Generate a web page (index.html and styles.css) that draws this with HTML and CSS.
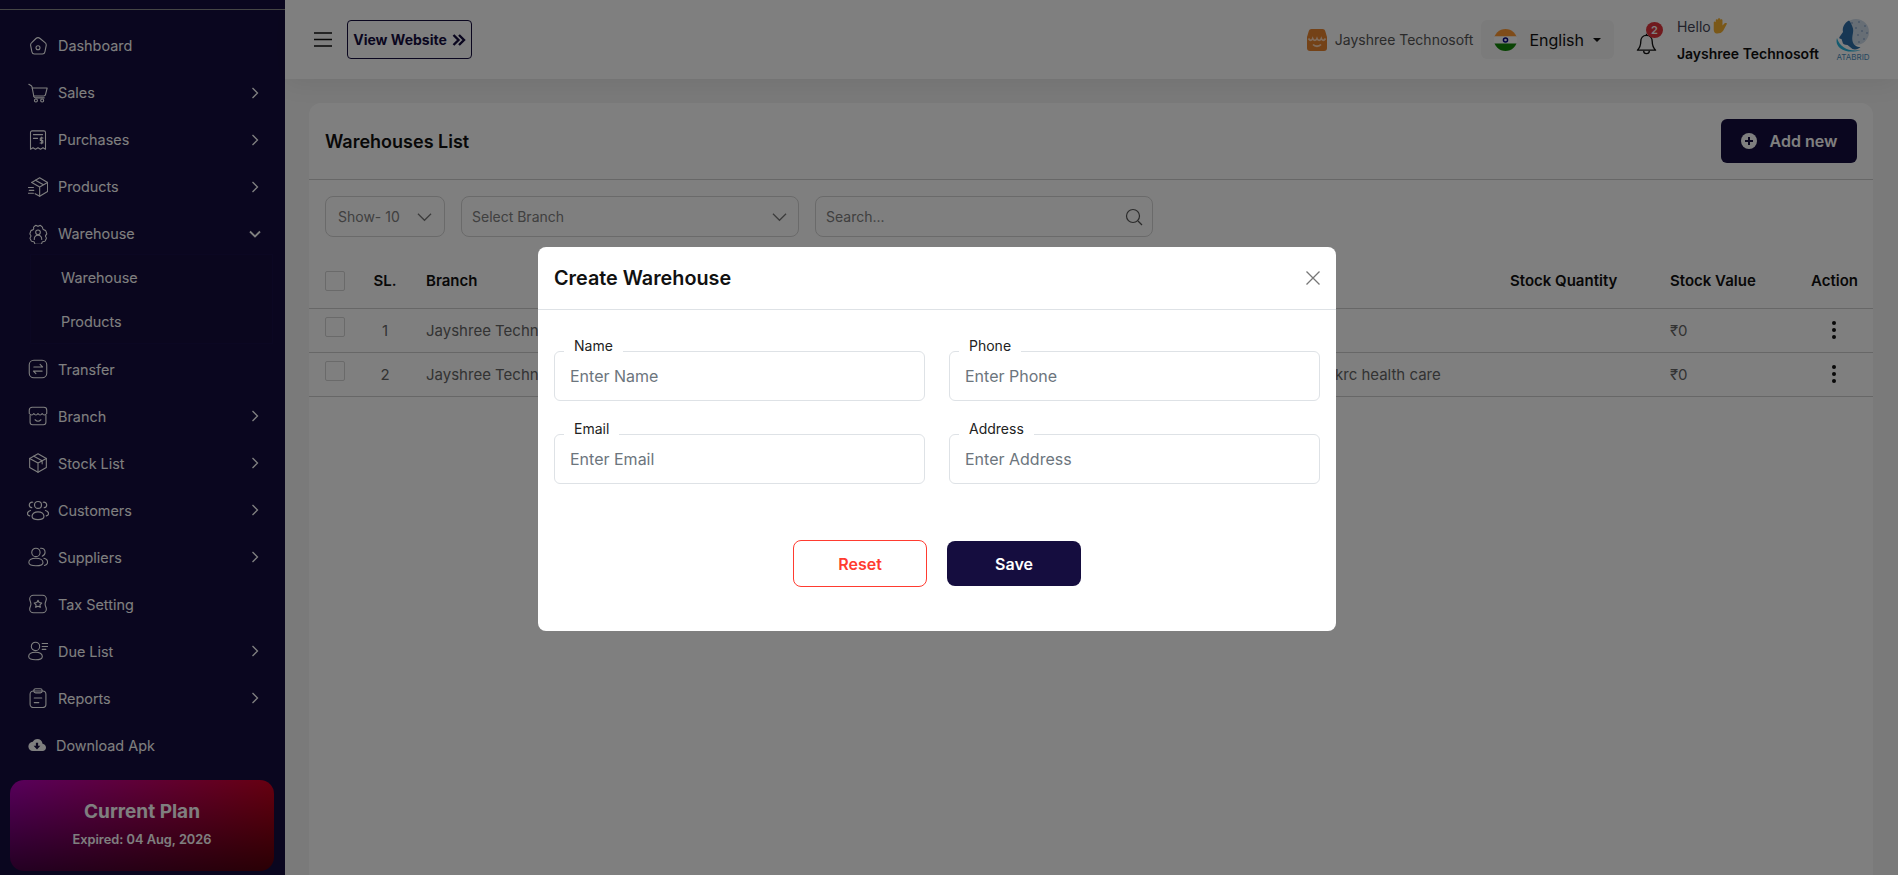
FILE: index.html
```html
<!DOCTYPE html>
<html lang="en">
<head>
    <meta charset="UTF-8">
    <title>Warehouses List</title>
    <link rel="stylesheet" href="styles.css">
</head>
<body>
    <div class="layout">
        <aside class="sidebar">
            <div class="sidebar-top"></div>
            <nav class="menu">
                <a class="menu-item"><svg class="menu-icon" viewBox="0 0 24 24"><path d="M9.500 3c1.500-1.300 3.500-1.300 5 0l6 5c1.200 1 1.600 2.200 1.300 3.500l-1.500 7.500c-.3 1.600-1.500 2.600-3 2.600H7.700c-1.500 0-2.700-1-3-2.600l-1.500-7.500C2.900 10.200 3.300 9 4.500 8l5-5Z"/><circle cx="12" cy="14" r="2.400"/></svg><span>Dashboard</span></a>
                <a class="menu-item"><svg class="menu-icon" viewBox="0 0 24 24"><path d="M1 1.500 3.500 3c.8.500 1.200 1.200 1.400 2L7 16.200c.2 1 1 1.600 2 1.600h10.500"/><path d="M5 6h18l-2 8c-.2 1-1 1.500-2 1.500H6.800"/><circle cx="9.500" cy="21" r="1.800"/><circle cx="17" cy="21" r="1.800"/></svg><span>Sales</span><svg class="menu-arrow" viewBox="0 0 8 12"><path d="m1.500 1 5 5-5 5"/></svg></a>
                <a class="menu-item"><svg class="menu-icon" viewBox="0 0 24 24"><path d="M5 1h14c1.200 0 2 .8 2 2v20l-3-1.800-3 1.800-3-1.800L9 23l-3-1.800L3 23V3c0-1.200.8-2 2-2Z"/><path d="M6.500 5.500h11M6.500 10h5"/><path d="M18 9.500h-3.200v3h3v3h-3.300M16.400 8.500v8"/></svg><span>Purchases</span><svg class="menu-arrow" viewBox="0 0 8 12"><path d="m1.500 1 5 5-5 5"/></svg></a>
                <a class="menu-item"><svg class="menu-icon" viewBox="0 0 24 24"><path d="m4.500 6.500 9.500-5.500 9.500 5.500v11L14 23l-5.500-3"/><path d="m4.500 6.500 9.500 5.500 9.500-5.500M14 12v11M9 3.800l9.500 5.500"/><path d="M.5 12.500h6M1.500 16h5.500M.5 19.500h6"/></svg><span>Products</span><svg class="menu-arrow" viewBox="0 0 8 12"><path d="m1.500 1 5 5-5 5"/></svg></a>
                <a class="menu-item is-open"><svg class="menu-icon" viewBox="0 0 24 24"><path d="M9 1.800c1-.8 1.800.8 3 .8s2-1.600 3-.8l2 1.700c.9.800.3 2 1.300 3s2.800.8 3.200 2l1 3c.3 1.200-1.500 1.500-1.500 2.900s1.500 2 1 3.100l-1.500 2.800c-.6 1-2.300.2-3.200 1.200s-.6 2.500-1.800 2.700H9c-1.300-.2-.9-1.700-1.800-2.700s-2.600-.2-3.200-1.200L2.500 17.500c-.5-1.100 1-1.700 1-3.100S2 12.700 2.300 11.500l1-3c.4-1.200 2.200-1 3.200-2S6.100 4.300 7 3.500l2-1.700Z"/><circle cx="12" cy="10" r="2.800"/><path d="M7.500 18.500c0-3 2-5 4.500-5s4.500 2 4.500 5"/></svg><span>Warehouse</span><svg class="menu-arrow is-down" viewBox="0 0 12 8"><path d="m1 1.500 5 5 5-5"/></svg></a>
                <div class="submenu">
                    <a class="submenu-item">Warehouse</a>
                    <a class="submenu-item">Products</a>
                </div>
                <a class="menu-item"><svg class="menu-icon" viewBox="0 0 24 24"><rect x="1.500" y="1.500" width="21" height="21" rx="5.500"/><path d="M7 9.500h10.500l-3-3M17 14.500H6.500l3 3"/></svg><span>Transfer</span></a>
                <a class="menu-item"><svg class="menu-icon" viewBox="0 0 24 24"><path d="M2.500 11v8.500c0 1.800 1.200 3 3 3h13c1.800 0 3-1.200 3-3V11"/><path d="M5 1.500h14c2 0 3.500 1.500 3.500 3.500v4c-2 2.500-4 2.500-5.500 0-1.500 2.500-3.500 2.500-5 0-1.500 2.500-3.500 2.500-5 0-1.500 2.500-3.500 2.500-5.500 0V5c0-2 1.500-3.500 3.500-3.500Z"/><path d="M8.500 16.500c2 2 5 2 7 0"/></svg><span>Branch</span><svg class="menu-arrow" viewBox="0 0 8 12"><path d="m1.500 1 5 5-5 5"/></svg></a>
                <a class="menu-item"><svg class="menu-icon" viewBox="0 0 24 24"><path d="m12 1 10 5.500v11L12 23 2 17.500v-11L12 1Z"/><path d="m2 6.500 10 5.500 10-5.500M12 12v11M7 3.800l10 5.500v3.700"/></svg><span>Stock List</span><svg class="menu-arrow" viewBox="0 0 8 12"><path d="m1.500 1 5 5-5 5"/></svg></a>
                <a class="menu-item"><svg class="menu-icon is-wide" viewBox="0 0 24 24"><circle cx="12" cy="6.500" r="3.800"/><path d="M5.500 18.800c0-3 3-4.800 6.500-4.800s6.500 1.800 6.500 4.800-3 3.700-6.500 3.700-6.500-.7-6.500-3.700Z"/><path d="M6.300 3.500c-2-.5-3.800 1-3.800 3 0 1.500 1 2.800 2.700 3M17.700 3.500c2-.5 3.800 1 3.800 3 0 1.500-1 2.800-2.700 3M3.800 12.500C1.800 13 .5 14.300.5 16c0 1.300 1 2.200 2.500 2.500M20.200 12.500c2 .5 3.300 1.800 3.300 3.500 0 1.300-1 2.200-2.500 2.500"/></svg><span>Customers</span><svg class="menu-arrow" viewBox="0 0 8 12"><path d="m1.500 1 5 5-5 5"/></svg></a>
                <a class="menu-item"><svg class="menu-icon" viewBox="0 0 24 24"><circle cx="9.500" cy="6.500" r="5"/><path d="M1 18.500c0-3 3.500-5 8.500-5s8.500 2 8.500 5-3.500 4-8.500 4-8.500-1-8.500-4Z"/><path d="M15 1.500c3.500-.5 5.500 2 5.500 4.700 0 2.300-1.300 4-3.500 4.800M19 13.500c2.800.5 4.500 2.300 4.500 4.800 0 1.900-1.500 3.400-3.800 3.900"/></svg><span>Suppliers</span><svg class="menu-arrow" viewBox="0 0 8 12"><path d="m1.500 1 5 5-5 5"/></svg></a>
                <a class="menu-item"><svg class="menu-icon" viewBox="0 0 24 24"><path d="M6.500 1.500h11c2.500 0 4.500 2 4.500 4.500 0 2-1.500 3.500-1.500 6s1.500 4 1.500 6c0 2.500-2 4.500-4.500 4.500h-11C4 22.500 2 20.500 2 18c0-2 1.500-3.500 1.500-6S2 8 2 6c0-2.500 2-4.500 4.500-4.500Z"/><path d="m12 7.500 1.400 2.800 3.100.5-2.200 2.200.5 3-2.800-1.400L9.200 16l.5-3-2.200-2.200 3.100-.5L12 7.500Z"/></svg><span>Tax Setting</span></a>
                <a class="menu-item"><svg class="menu-icon" viewBox="0 0 24 24"><circle cx="9" cy="6.500" r="5"/><path d="M.8 18.500c0-3 3.500-5 8.200-5s8.200 2 8.200 5-3.500 4-8.200 4-8.200-1-8.200-4Z"/><path d="M17 3h6.500M17 6.500h6.500M17 10h4.500"/></svg><span>Due List</span><svg class="menu-arrow" viewBox="0 0 8 12"><path d="m1.500 1 5 5-5 5"/></svg></a>
                <a class="menu-item"><svg class="menu-icon" viewBox="0 0 24 24"><rect x="2.500" y="3.500" width="19" height="20" rx="4"/><rect x="7" y=".8" width="10" height="5" rx="2.200"/><path d="M7.500 12h9M7.500 17.500h5.500"/></svg><span>Reports</span><svg class="menu-arrow" viewBox="0 0 8 12"><path d="m1.500 1 5 5-5 5"/></svg></a>
                <a class="menu-item is-download"><svg class="menu-icon is-solid" viewBox="0 0 24 24"><path d="M19.400 10.200C19 6.500 16 4 12.500 4 9.800 4 7.500 5.500 6.400 7.700 3 8 .5 10.700.5 14c0 3.300 2.700 6 6 6h13c2.500 0 4.500-2 4.500-4.800 0-2.500-2-4.700-4.600-5Z"/><path class="cut" d="M10.500 9h3v4h3L12 18l-4.500-5h3V9Z"/></svg><span>Download Apk</span></a>
            </nav>
            <div class="plan">
                <div class="plan-title">Current Plan</div>
                <div class="plan-date">Expired: 04 Aug, 2026</div>
            </div>
        </aside>

        <div class="main">
            <header class="topbar">
                <svg class="burger" viewBox="0 0 18 15"><path d="M0 1h18M0 7.500h18M0 14h18"/></svg>
                <a class="view-btn">View Website <svg viewBox="0 0 14 12"><path d="m1.500 1 5 5-5 5M7 1l5 5-5 5"/></svg></a>
                <div class="topbar-right">
                    <div class="shop">
                        <svg class="shop-icon" viewBox="0 0 20 22"><path d="M4.500 0h11c1.500 0 2.300.8 2.700 2L20 8v11c0 2-1 3-3 3H3c-2 0-3-1-3-3V8l1.800-6C2.200.8 3 0 4.500 0Z" fill="#e9842f"/><path d="M1.500 9.500c1.500 2.400 3.200 2.400 4.200 0 1 2.400 3.300 2.400 4.300 0 1 2.400 3.300 2.400 4.300 0 1 2.400 2.700 2.400 4.200 0" fill="none" stroke="#ffd9b8" stroke-width="1.700"/><path d="M6 15.500c2 2.300 6 2.300 8 0" fill="none" stroke="#ffd9b8" stroke-width="1.800"/></svg>
                        <span>Jayshree Technosoft</span>
                    </div>
                    <div class="lang">
                        <svg class="flag" viewBox="0 0 23 22">
                            <defs><clipPath id="flagClip"><ellipse cx="11.500" cy="11" rx="11.500" ry="11"/></clipPath></defs>
                            <g clip-path="url(#flagClip)">
                                <rect width="23" height="7.500" fill="#ff9933"/>
                                <rect y="7.500" width="23" height="7" fill="#fff"/>
                                <rect y="14.500" width="23" height="7.500" fill="#138808"/>
                                <circle cx="11.500" cy="11" r="2.800" fill="#000080"/>
                                <circle cx="11.500" cy="11" r="1.300" fill="#fff"/>
                            </g>
                        </svg>
                        <span>English</span>
                        <i class="caret"></i>
                    </div>
                    <div class="bell">
                        <svg viewBox="0 0 22 23"><path d="M11 2.500c-3.800 0-6 2.800-6 6.500 0 4-1 6.500-3.500 9h19C18 15.500 17 13 17 9c0-3.700-2.200-6.500-6-6.500Z"/><path d="M8 18.500c0 4 6 4 6 0M11 .8v1.700"/></svg>
                        <span class="badge">2</span>
                    </div>
                    <div class="user">
                        <div class="hello">Hello <svg viewBox="2.500 .5 11 15" preserveAspectRatio="none"><path d="M3 8V4.500c0-1 1.300-1 1.400 0V2.500c0-1 1.500-1 1.500 0V1.500c0-1 1.600-1 1.600 0v1c0-1 1.500-1 1.500 0v5l1.500-2c.7-.8 2-.2 1.400.8L9.500 12.500C8.500 14.500 7 15 5.500 15 3.500 15 3 13 3 11V8Z" fill="#f5b030"/></svg></div>
                        <div class="user-name">Jayshree Technosoft</div>
                    </div>
                    <div class="brand">
                        <svg viewBox="0 0 38 34">
                            <circle cx="22" cy="13" r="13" fill="#cfdcea"/>
                            <g fill="#6f8fc0">
                                <circle cx="18" cy="4" r=".8"/><circle cx="25" cy="3" r=".8"/><circle cx="31" cy="7" r=".8"/>
                                <circle cx="22" cy="9" r=".8"/><circle cx="28" cy="12" r=".8"/><circle cx="33" cy="14" r=".8"/>
                                <circle cx="24" cy="16" r=".8"/><circle cx="30" cy="20" r=".8"/><circle cx="25" cy="23" r=".8"/>
                            </g>
                            <path d="M15 1.500C10 4 8 9 9 13l-3.500 5c-.7 1 0 2 2 2l1 3c0 2 2 3 5 3l5 4c3 1 6 0 8-2-4 0-7-2-8-6-1-6 2-9 0-14-.8-2.500-2-5-3.500-6.500Z" fill="#2f6fa8"/>
                            <path d="M3 19C0 28 11 36 27 31 15 33 6 29 3 19Z" fill="#29b6e0"/>
                        </svg>
                        <span>ATABRID</span>
                    </div>
                </div>
            </header>

            <section class="card">
                <div class="card-head">
                    <h1>Warehouses List</h1>
                    <a class="add-btn"><svg viewBox="0 0 16 16"><circle cx="8" cy="8" r="8" fill="#fff"/><path d="M8 4v8M4 8h8" stroke="#150d3f" stroke-width="2"/></svg>Add new</a>
                </div>
                <div class="filters">
                    <div class="select select-show">Show- 10 <svg viewBox="0 0 16 10"><path d="m1 1.500 7 7 7-7"/></svg></div>
                    <div class="select select-branch">Select Branch <svg viewBox="0 0 16 10"><path d="m1 1.500 7 7 7-7"/></svg></div>
                    <div class="search">
                        <input type="text" placeholder="Search...">
                        <svg viewBox="0 0 18 18"><circle cx="8" cy="8" r="6.500"/><path d="m13 13 4 4"/></svg>
                    </div>
                </div>
                <table class="table">
                    <thead>
                        <tr>
                            <th class="col-check"><span class="check"></span></th>
                            <th class="col-sl">SL.</th>
                            <th class="col-branch">Branch</th>
                            <th class="col-address"></th>
                            <th class="col-qty">Stock Quantity</th>
                            <th class="col-value">Stock Value</th>
                            <th class="col-action">Action</th>
                        </tr>
                    </thead>
                    <tbody>
                        <tr>
                            <td class="col-check"><span class="check"></span></td>
                            <td class="col-sl">1</td>
                            <td class="col-branch">Jayshree Technosoft</td>
                            <td></td>
                            <td></td>
                            <td>₹0</td>
                            <td class="col-action"><span class="dots"><i></i><i></i><i></i></span></td>
                        </tr>
                        <tr>
                            <td class="col-check"><span class="check"></span></td>
                            <td class="col-sl">2</td>
                            <td class="col-branch">Jayshree Technosoft</td>
                            <td>krc health care</td>
                            <td></td>
                            <td>₹0</td>
                            <td class="col-action"><span class="dots"><i></i><i></i><i></i></span></td>
                        </tr>
                    </tbody>
                </table>
            </section>
        </div>
    </div>

    <div class="overlay">
        <form class="modal">
            <div class="modal-head">
                <h2>Create Warehouse</h2>
                <svg class="modal-close" viewBox="0 0 14 14"><path d="m.5.500 13 13M13.500.500l-13 13"/></svg>
            </div>
            <div class="modal-fields">
                <div class="field">
                    <label for="name">Name</label>
                    <input id="name" type="text" placeholder="Enter Name">
                </div>
                <div class="field">
                    <label for="phone">Phone</label>
                    <input id="phone" type="text" placeholder="Enter Phone">
                </div>
                <div class="field">
                    <label for="email">Email</label>
                    <input id="email" type="text" placeholder="Enter Email">
                </div>
                <div class="field">
                    <label for="address">Address</label>
                    <input id="address" type="text" placeholder="Enter Address">
                </div>
            </div>
            <div class="modal-actions">
                <button type="reset" class="btn-reset">Reset</button>
                <button type="button" class="btn-save">Save</button>
            </div>
        </form>
    </div>
</body>
</html>
```
FILE: styles.css
```css
* {
    margin: 0;
    padding: 0;
    box-sizing: border-box;
}

body {
    font-family: Inter, "Liberation Sans", sans-serif;
    font-size: 14px;
    color: #111;
    background: #f4f4f4;
    height: 875px;
    overflow: hidden;
}

.layout {
    display: flex;
    height: 875px;
}

/* sidebar */
.sidebar {
    width: 285px;
    flex-shrink: 0;
    background: #150d3f;
    color: #fff;
    font-size: 14.4px;
    display: flex;
    flex-direction: column;
}

.sidebar-top {
    height: 10px;
    border-bottom: 1px solid #8a8a8a;
}

.menu {
    margin-top: 12px;
    display: flex;
    flex-direction: column;
}

.menu-item {
    height: 47px;
    padding: 0 26px 0 28px;
    display: flex;
    align-items: center;
    gap: 10px;
}

.menu-item span {
    flex: 1;
}

.menu-icon {
    width: 20px;
    height: 20px;
    flex-shrink: 0;
    fill: none;
    stroke: #fff;
    stroke-width: 1.300;
    stroke-linecap: round;
    stroke-linejoin: round;
}

.menu-icon.is-wide {
    width: 22px;
    height: 22px;
    margin: 0 -1px;
}

.menu-icon.is-solid {
    width: 18px;
    height: 18px;
    fill: #fff;
    stroke: none;
}

.menu-icon .cut {
    fill: #150d3f;
}

.menu-arrow {
    width: 8px;
    height: 12px;
    fill: none;
    stroke: #fff;
    stroke-width: 1.300;
}

.menu-arrow.is-down {
    width: 12px;
    height: 8px;
    margin-right: -2px;
    stroke-width: 1.800;
}

.submenu {
    margin: -3px 12px 1.500px 30px;
    background: #140c3c;
    border: 1px solid #170f44;
}

.submenu-item {
    height: 44px;
    padding-left: 30px;
    display: flex;
    align-items: center;
}

.plan {
    margin: 11.500px 11px 0 10px;
    height: 91px;
    border-radius: 14px;
    background: linear-gradient(to bottom, rgba(0, 0, 0, 0), rgba(0, 0, 0, 0.6)), linear-gradient(100deg, #b000b8, #d00018);
    text-align: center;
    padding-top: 21px;
}

.plan-title {
    font-size: 19px;
    font-weight: 700;
    line-height: 22px;
}

.plan-date {
    margin-top: 8px;
    font-size: 12.800px;
    font-weight: 600;
    line-height: 18px;
}

/* top bar */
.main {
    flex: 1;
    min-width: 0;
}

.topbar {
    height: 79px;
    background: #fff;
    padding: 0 26px 0 29px;
    display: flex;
    align-items: center;
    box-shadow: 0 4px 24px rgba(0, 0, 0, 0.07);
    position: relative;
}

.burger {
    width: 18px;
    height: 15px;
    fill: none;
    stroke: #111;
    stroke-width: 1.400;
}

.view-btn {
    margin-left: 15px;
    width: 125px;
    height: 39px;
    border: 1px solid #150d3f;
    border-radius: 4px;
    color: #150d3f;
    font-weight: 700;
    display: flex;
    align-items: center;
    justify-content: center;
    gap: 5px;
}

.view-btn svg {
    width: 14px;
    height: 12px;
    fill: none;
    stroke: #150d3f;
    stroke-width: 2.400;
}

.topbar-right {
    margin-left: auto;
    display: flex;
    align-items: center;
}

.shop {
    display: flex;
    align-items: center;
    gap: 8px;
    color: #555;
}

.shop-icon {
    width: 20px;
    height: 22px;
}

.lang {
    margin-left: 8px;
    height: 39px;
    padding: 0 13px;
    background: #f6f6f6;
    border-radius: 6px;
    display: flex;
    align-items: center;
    font-size: 16px;
}

.flag {
    width: 23px;
    height: 22px;
    margin-right: 12px;
}

.caret {
    margin-left: 9px;
    border: 4px solid transparent;
    border-top-color: #111;
    border-bottom: 0;
}

.bell {
    margin-left: 22px;
    width: 21px;
    height: 22px;
    position: relative;
    top: 4px;
}

.bell svg {
    width: 21px;
    height: 22px;
    fill: none;
    stroke: #111;
    stroke-width: 1.400;
    stroke-linejoin: round;
}

.badge {
    position: absolute;
    top: -11px;
    left: 10px;
    width: 17px;
    height: 16px;
    border-radius: 50%;
    background: #e0353c;
    color: #fff;
    font-size: 11px;
    font-weight: 600;
    line-height: 16px;
    text-align: center;
}

.user {
    margin-left: 20px;
}

.hello {
    display: flex;
    align-items: center;
    gap: 2px;
    color: #445;
    line-height: 17px;
}

.hello svg {
    width: 16px;
    height: 16px;
}

.user-name {
    margin-top: 10px;
    font-weight: 600;
    line-height: 17px;
}

.brand {
    margin-left: 15px;
    width: 38px;
    height: 42px;
}

.brand svg {
    display: block;
    width: 38px;
    height: 34px;
}

.brand span {
    display: block;
    font-size: 8px;
    line-height: 8px;
    text-align: center;
    color: #4a8fc0;
}

/* card */
.card {
    margin: 24px 25px 0 24px;
    height: 800px;
    background: #fff;
    border-radius: 12px 12px 0 0;
}

.card-head {
    height: 77px;
    padding: 0 16px;
    border-bottom: 1px solid #cfcfcf;
    display: flex;
    align-items: center;
    justify-content: space-between;
}

.card-head h1 {
    font-size: 18px;
    font-weight: 600;
}

.add-btn {
    width: 136px;
    height: 44px;
    background: #150d3f;
    border-radius: 6px;
    color: #fff;
    font-size: 16px;
    font-weight: 600;
    display: flex;
    align-items: center;
    justify-content: center;
    gap: 13px;
}

.add-btn svg {
    width: 16px;
    height: 16px;
}

.filters {
    padding: 16px 16px 0;
    display: flex;
    gap: 16px;
}

.select {
    height: 41px;
    padding: 0 12px;
    border: 1px solid #d4d4d4;
    border-radius: 8px;
    color: #808080;
    display: flex;
    align-items: center;
    justify-content: space-between;
}

.select svg {
    width: 15px;
    height: 10px;
    fill: none;
    stroke: #777;
    stroke-width: 1.300;
}

.select-show {
    width: 120px;
}

.select-branch {
    width: 338px;
    padding-left: 10px;
    padding-right: 11px;
}

.search {
    width: 338px;
    height: 41px;
    padding: 0 9px 0 10px;
    border: 1px solid #d4d4d4;
    border-radius: 8px;
    display: flex;
    align-items: center;
}

.search input {
    flex: 1;
    min-width: 0;
    border: none;
    outline: none;
    background: none;
    font: inherit;
    font-size: 14px;
}

.search input::placeholder {
    color: #808080;
}

.search svg {
    width: 18px;
    height: 18px;
    fill: none;
    stroke: #555;
    stroke-width: 1.200;
}

/* table */
.table {
    margin-top: 16px;
    width: 100%;
    table-layout: fixed;
    border-collapse: collapse;
    font-size: 15px;
}

.table th,
.table td {
    text-align: left;
    border-bottom: 1px solid #cfcfcf;
}

.table th {
    height: 55px;
    font-weight: 600;
}

.table td {
    height: 44px;
    color: #666;
}

.check {
    display: block;
    width: 20px;
    height: 20px;
    border: 1px solid #d4d4d4;
    border-radius: 2px;
}

.table th .check {
    margin-top: 1px;
}

.table td .check {
    margin-top: -6px;
}

.col-check {
    width: 51px;
    padding-left: 16px;
}

.table .col-sl {
    width: 50px;
    text-align: center;
}

.col-branch {
    width: 925px;
    padding-left: 16px;
}

.col-address {
    width: 175px;
}

.col-qty {
    width: 160px;
}

.col-value {
    width: 141px;
}

.dots {
    width: 46px;
    display: flex;
    flex-direction: column;
    align-items: center;
    gap: 3px;
}

.dots i {
    width: 4px;
    height: 4px;
    border-radius: 50%;
    background: #111;
}

/* modal */
.overlay {
    position: fixed;
    inset: 0;
    background: rgba(0, 0, 0, 0.5);
    display: flex;
    justify-content: center;
    padding: 247px 24px 0 0;
}

.modal {
    width: 798px;
    height: 384px;
    background: #fff;
    border-radius: 8px;
}

.modal-head {
    height: 63px;
    padding: 0 16px;
    border-bottom: 1px solid #dee2e6;
    display: flex;
    align-items: center;
    justify-content: space-between;
}

.modal-head h2 {
    font-size: 19.800px;
    font-weight: 600;
    color: #111;
}

.modal-close {
    width: 14px;
    height: 14px;
    fill: none;
    stroke: #777;
    stroke-width: 1.300;
}

.modal-fields {
    padding: 41px 16px 0;
    display: grid;
    grid-template-columns: 371px 371px;
    gap: 33px 24px;
}

.field {
    position: relative;
}

.field label {
    position: absolute;
    top: -14px;
    left: 10px;
    padding: 0 10px;
    background: #fff;
    line-height: 17px;
    color: #222;
}

.field input {
    width: 100%;
    height: 50px;
    padding: 0 15px;
    border: 1px solid #dee2e6;
    border-radius: 6px;
    font: inherit;
    font-size: 16px;
    outline: none;
}

.field input::placeholder {
    color: #6c757d;
}

.modal-actions {
    margin-top: 56px;
    display: flex;
    justify-content: center;
    align-items: center;
    gap: 20px;
}

.modal-actions button {
    width: 134px;
    font: inherit;
    font-size: 16px;
    font-weight: 600;
    border-radius: 8px;
    cursor: pointer;
}

.btn-reset {
    height: 47px;
    background: #fff;
    border: 1px solid #ff3b30;
    color: #ff3b30;
}

.btn-save {
    height: 45px;
    background: #150d3f;
    border: none;
    color: #fff;
}
```
